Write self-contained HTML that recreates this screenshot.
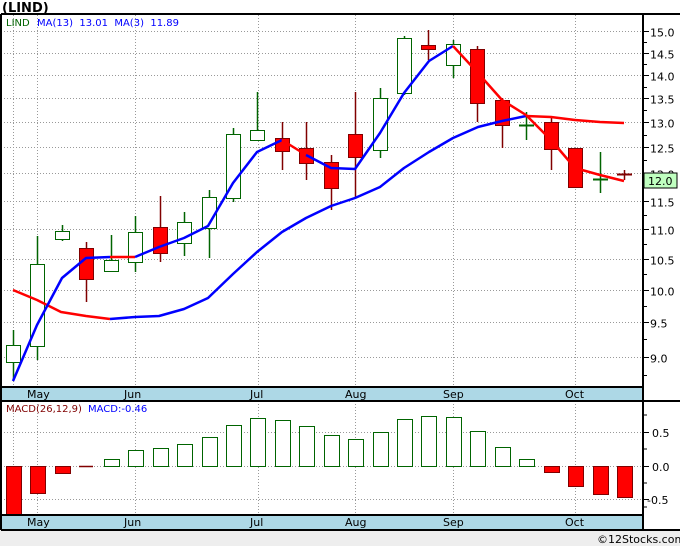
<!DOCTYPE html>
<html><head><meta charset="utf-8"><style>
html,body{margin:0;padding:0;background:#fff;width:680px;height:546px;overflow:hidden;font-family:"DejaVu Sans",sans-serif}
svg text{font-family:"DejaVu Sans","Liberation Sans",sans-serif}
</style></head><body>
<svg id="s" width="680" height="546" xmlns="http://www.w3.org/2000/svg">
<rect x="0" y="530" width="680" height="16" fill="#eeeeee"/>
<text x="2" y="12" font-size="13" font-weight="bold" fill="#000">(LIND)</text>
<rect x="1" y="387" width="642" height="14" fill="#add8e6"/>
<rect x="1" y="515" width="642" height="15" fill="#add8e6"/>
<g id="grid" stroke="#999" stroke-dasharray="1,2" stroke-width="1"></g>
<g id="cand"></g>
<g id="lines" fill="none" stroke-width="2.5" stroke-linejoin="round"></g>
<g id="macd"></g>
<g stroke="#000" stroke-width="2" fill="none">
<line x1="1" y1="14" x2="680" y2="14"/>
<line x1="1" y1="14" x2="1" y2="530"/>
<line x1="643" y1="14" x2="643" y2="530"/>
<line x1="1" y1="387" x2="643" y2="387"/>
<line x1="1" y1="401" x2="680" y2="401"/>
<line x1="1" y1="515" x2="643" y2="515"/>
<line x1="1" y1="530" x2="680" y2="530"/>
</g>
<g id="axis" font-size="11" fill="#000"></g>
<g font-size="11" fill="#000">
<text x="27" y="398">May</text><text x="124" y="398">Jun</text><text x="250" y="398">Jul</text><text x="345" y="398">Aug</text><text x="443" y="398">Sep</text><text x="565" y="398">Oct</text>
<text x="27" y="526">May</text><text x="124" y="526">Jun</text><text x="250" y="526">Jul</text><text x="345" y="526">Aug</text><text x="443" y="526">Sep</text><text x="565" y="526">Oct</text>
</g>
<text x="6" y="26" font-size="10" fill="#006400">LIND</text>
<text x="37" y="26" font-size="10" fill="#0000ff" xml:space="preserve">MA(13)  13.01  MA(3)  11.89</text>
<text x="6" y="412" font-size="10" fill="#800000">MACD(26,12,9)</text>
<text x="88" y="412" font-size="10" fill="#0000ff">MACD:-0.46</text>
<rect x="644" y="173" width="33" height="15" fill="#c0ffc0" stroke="#000" stroke-width="1"/>
<text x="648" y="185" font-size="11">12.0</text>
<text x="597" y="543" font-size="11" fill="#000">©12Stocks.com</text>
</svg>
<script>
var NS="http://www.w3.org/2000/svg";
function el(p,t,a){var e=document.createElementNS(NS,t);for(var k in a)e.setAttribute(k,a[k]);document.getElementById(p).appendChild(e);return e;}
function Y(p){return 31+638*(Math.log(15)-Math.log(p));}
for(var p=9;p<=15.01;p+=0.5){var y=Math.round(Y(p))+0.5;el('grid','line',{x1:1,y1:y,x2:643,y2:y});el('axis','line',{x1:643,y1:y,x2:649,y2:y,stroke:'#000'});var t=el('axis','text',{x:650,y:y+5});t.textContent=p.toFixed(1);}
for(var p=8.75;p<=15.01;p+=0.5){var y=Math.round(Y(p))+0.5;el('axis','line',{x1:643,y1:y,x2:647,y2:y,stroke:'#000'});}
[13,37,135,258,355,453,575].forEach(function(x){el('grid','line',{x1:x+.5,y1:15,x2:x+.5,y2:387});el('grid','line',{x1:x+.5,y1:401,x2:x+.5,y2:515});});
[432,466,499].forEach(function(y){el('grid','line',{x1:1,y1:y+.5,x2:643,y2:y+.5});});
[[432,'0.5'],[466,'0.0'],[499,'-0.5']].forEach(function(a){el('axis','line',{x1:643,y1:a[0]+.5,x2:649,y2:a[0]+.5,stroke:'#000'});var t=el('axis','text',{x:a[1][0]=='-'?647:652,y:a[0]+5});t.textContent=a[1];});
[415,449,483,507].forEach(function(y){el('axis','line',{x1:643,y1:y,x2:647,y2:y,stroke:'#000'});});
var xs=[];for(var i=0;i<26;i++)xs.push(Math.round(13+i*24.44));
var c=[['w',345,362,330,381],['w',264,346,236,360],['w',231,239,225,241],['r',248,279,242,302],['w',260,271,235,272],['w',232,262,216,272],['r',227,253,196,262],['w',222,243,212,256],['w',197,228,190,258],['w',134,198,128,202],['w',130,140,92,140],['r',138,151,122,170],['r',148,163,122,180],['r',162,188,155,210],['r',134,157,92,198],['w',98,150,88,158],['w',38,93,36,95],['r',45,49,30,60],['w',44,65,40,78],['r',49,103,46,122],['r',100,125,98,148],['d',125,125,112,140],['r',122,149,116,170],['r',148,187,148,188],['g',179,179,152,193],['k',174,174,170,180]];
c.forEach(function(d,i){var x=xs[i];var col=d[0]=='r'?'#800000':(d[0]=='k'?'#800000':'#006400');
el('cand','line',{x1:x+.5,y1:d[3],x2:x+.5,y2:d[4],stroke:col,'stroke-width':1.5});
if(d[0]=='w'||d[0]=='r')el('cand','rect',{x:x-7+.5,y:d[1]+.5,width:14,height:d[2]-d[1],fill:d[0]=='r'?'#ff0000':'#fff',stroke:col});
else el('cand','line',{x1:x-7,y1:d[1]+.5,x2:x+8,y2:d[1]+.5,stroke:col,'stroke-width':2});});
function pl(pts,col){el('lines','polyline',{points:pts,stroke:col});}
pl('13,290 37,300 61,312 86,316 110,319','#ff0000');
pl('110,319 135,317 159,316 184,309 208,298 233,274 257,252 282,232 306,218 331,206 355,198 380,187 404,168 429,152 453,138 478,127 502,121 526,116','#0000ff');
pl('526,116 551,117 575,120 600,122 624,123','#ff0000');
pl('13,381 37,325 62,278 86,258 110,257','#0000ff');
pl('110,257 135,257','#ff0000');
pl('135,257 159,247 184,238 208,226 233,183 257,152 282,140','#0000ff');
pl('282,140 306,155','#ff0000');
pl('306,155 331,168 355,169 380,133 404,93 429,61 453,46','#0000ff');
pl('453,46 478,73 502,100 526,115 551,140 575,168 600,175 624,181','#ff0000');
var m=[515,493,473,467,459,450,448,444,437,425,418,420,426,435,439,432,419,416,417,431,447,459,472,486,494,497];
m.forEach(function(v,i){var x=xs[i];var red=v>466;var y0=Math.min(v,466),h=Math.abs(v-466);
if(h<2){el('macd','line',{x1:x-7,y1:466.5,x2:x+7,y2:466.5,stroke:'#800000','stroke-width':1.5});return;}
el('macd','rect',{x:x-7+.5,y:y0+.5,width:15,height:h,fill:red?'#ff0000':'#fff',stroke:red?'#800000':'#006400'});});
</script>
</body></html>
